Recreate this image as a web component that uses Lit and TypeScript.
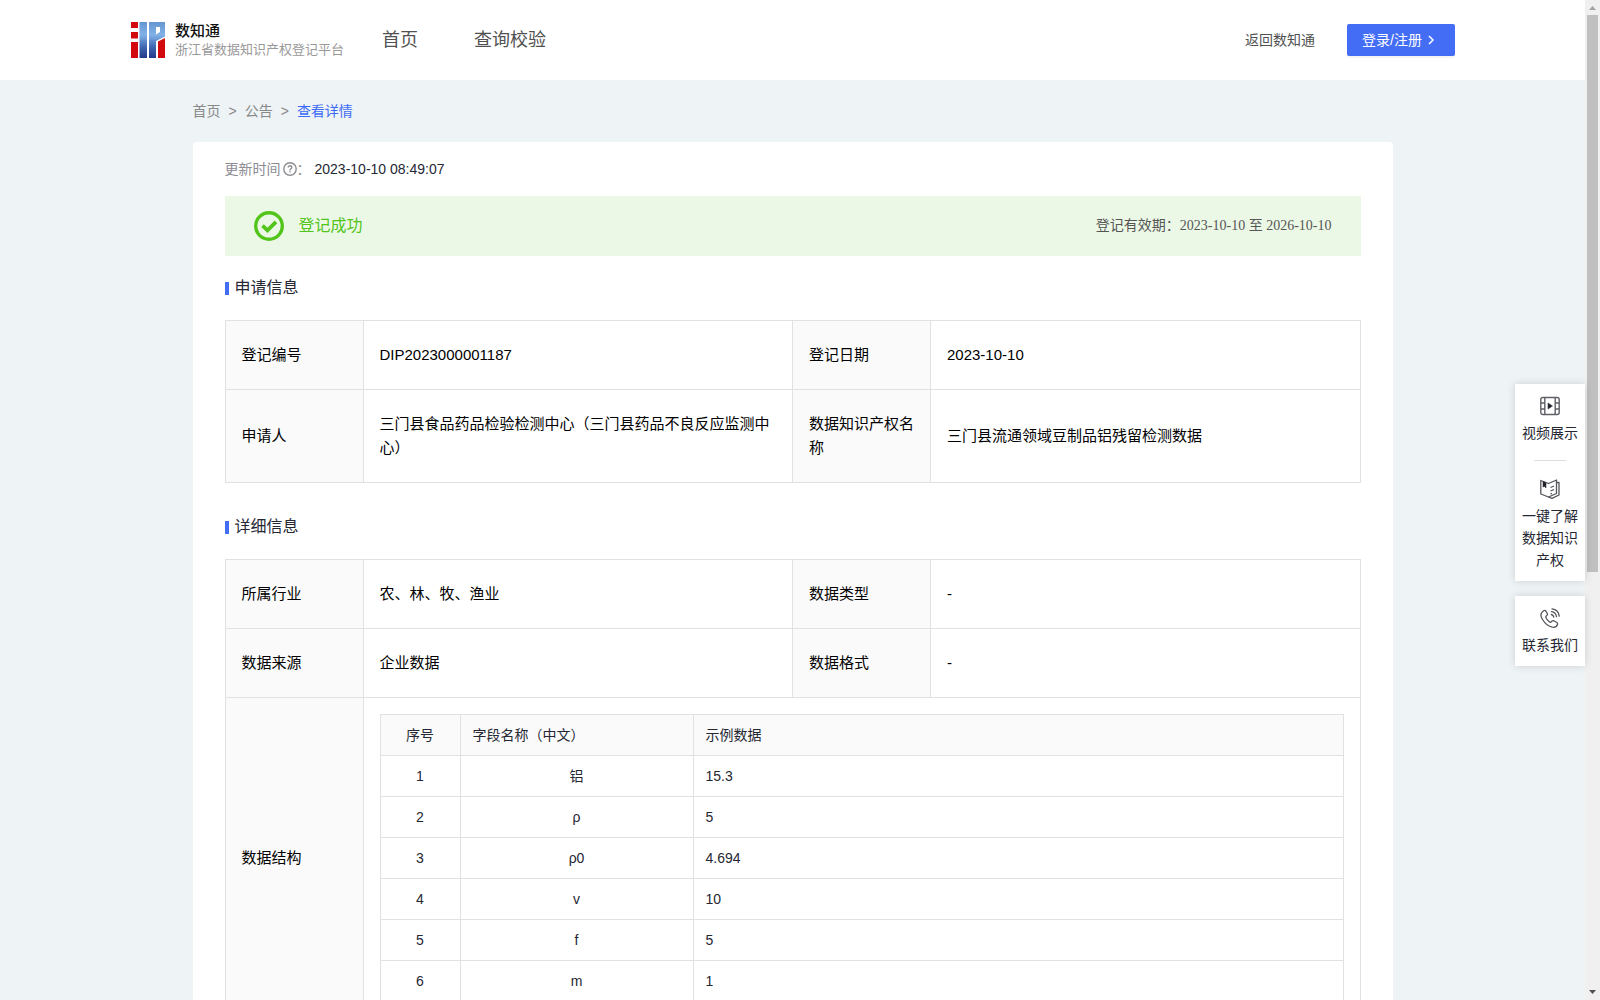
import { LitElement, html, css, svg } from "lit";
import { customElement } from "lit/decorators.js";

const rows: [string, string, string][] = [
  ["1", "铝", "15.3"],
  ["2", "ρ", "5"],
  ["3", "ρ0", "4.694"],
  ["4", "v", "10"],
  ["5", "f", "5"],
  ["6", "m", "1"],
];

const stripes = Array.from({ length: 9 }, (_, i) => i * 2 + 1);

const logo = html`<svg class="logo" viewBox="0 0 34 36" width="34" height="36" aria-hidden="true">
  <defs>
    <linearGradient id="blue" x1="0" y1="0" x2="0" y2="36" gradientUnits="userSpaceOnUse">
      <stop offset="0" stop-color="#5b8fcd" />
      <stop offset=".35" stop-color="#78ade6" />
      <stop offset=".7" stop-color="#3f66b0" />
      <stop offset="1" stop-color="#22398a" />
    </linearGradient>
  </defs>
  <g fill="#d20a0e">
    <path d="M0 0h7v6H0zM0 10h7v6.500H0zM0 20h7v16H0z" />
    <path d="M27 19.500L34 16V36H27z" />
  </g>
  <g fill="url(#blue)">
    <path d="M8.500 0h7.500v36H8.500z" />
    <path fill-rule="evenodd" d="M18 0h16v14.500L25 19V36h-7zM25 5v7.500l4-2.500V5z" />
  </g>
  <g stroke="#fff" stroke-opacity=".25" stroke-width=".5">
    ${stripes.map((y) => svg`<path d="M9 ${y}h25" />`)}
  </g>
</svg>`;

const videoIcon = html`<svg class="side-icon" viewBox="0 0 20 20" fill="none" stroke="#5f6066" stroke-width="1.400" aria-hidden="true">
  <rect x=".8" y="1.500" width="18.400" height="17" rx="2" />
  <path d="M4.800 1.500v17M15.200 1.500v17M1 7h3.800M1 13h3.800M15.200 7H19M15.200 13H19" />
  <path d="M8 7l4.500 3L8 13z" fill="#22242c" stroke="#22242c" stroke-width=".5" />
</svg>`;

const bookIcon = html`<svg class="side-icon" viewBox="0 0 20 20" fill="none" stroke="#55565c" stroke-width="1.300" stroke-linejoin="round" aria-hidden="true">
  <path d="M.8 1.500L8.500 4.500 16.500 1v13.500L8.500 18 .8 15z" />
  <path d="M17 3.500h2V16L12 19.400 8.500 18M10.500 8.500l3.500-1.500M10.500 12l3.500-1.500M10.500 15l1.500-.6" />
  <path d="M3 2.500l3 1.200V9L4.500 7.500 3 8z" fill="#22242c" stroke="#22242c" stroke-width=".5" />
</svg>`;

const phoneIcon = html`<svg class="side-icon" viewBox="0 0 20 20" fill="none" stroke="#55565c" stroke-width="1.300" stroke-linecap="round" stroke-linejoin="round" aria-hidden="true">
  <path d="M3 3.200C.5 5 .3 8 2.500 11.500c2.600 4.200 6 7 9.800 7.700 2.500.4 4.500-.8 5.200-2.700.4-1-.2-1.700-1-2.200l-2.700-1.500c-1.200-.6-1.800.2-2.500 1-.6.700-1.300.5-2-.1-1.700-1.300-2.700-2.600-3.300-4-.4-.9-.2-1.400.5-1.900 1-.7 1.300-1.300.8-2.300L6 3.400C5.300 2.200 4.200 2.200 3 3.200z" />
  <path d="M11.300 6.500c1.400.3 2.200 1.200 2.500 2.600M11.500 3.700c2.700.4 4.600 2.300 5 5M12 .9c4 .5 6.700 3.300 7.200 7.200" />
</svg>`;

@customElement("app-root")
export class AppRoot extends LitElement {
  static styles = css`
    :host {
      display: block;
      height: 100vh;
      color: #252733;
      background: #eef3f6;
      font: 14px/22px "Liberation Sans", "Noto Sans CJK SC", sans-serif;
    }
    * { box-sizing: border-box; }
    a { color: inherit; text-decoration: none; }
    .window { display: flex; height: 100%; overflow: hidden; position: relative; }
    .view { flex: 1; min-width: 0; overflow-y: auto; scrollbar-width: none; }

    .header { display: flex; align-items: center; height: 80px; padding: 0 130px 0 131px; background: #fff; }
    .brand { display: flex; align-items: center; gap: 10px; }
    .logo { display: block; }
    .brand-text { display: flex; flex-direction: column; }
    .brand-name { font-size: 15px; line-height: 20px; font-weight: 500; color: #111; }
    .brand-sub { font-size: 13px; line-height: 18px; color: #999; white-space: nowrap; }
    .nav { display: flex; gap: 56px; margin-left: 38px; font-size: 18px; line-height: 24px; color: #515151; }
    .account { display: flex; align-items: center; gap: 32px; margin-left: auto; color: #515151; }
    .login {
      display: flex; align-items: center; gap: 6px;
      height: 32px; padding: 0 20px 0 15px; border: 0; border-radius: 2px;
      background: #446df6; color: #fff; font: inherit; cursor: pointer;
      box-shadow: 0 2px 0 rgba(0, 0, 0, 0.045);
    }

    .container { width: 1200px; max-width: 100%; margin: 0 auto; }
    .crumbs { display: flex; align-items: center; gap: 8px; padding: 20px 0; color: #888; }
    .crumb-here { color: #3d6bf5; }

    .card { padding: 16px 32px 32px; background: #fff; border-radius: 4px; }
    .updated { display: flex; align-items: center; }
    .updated-label { display: flex; align-items: center; gap: 2px; color: #8c8c92; }
    .help { display: block; }
    .updated-colon { color: #8c8c92; width: 18px; }

    .banner {
      display: flex; align-items: center; gap: 15px;
      height: 60px; margin-top: 16px; padding: 0 29px; background: #ecf8e6;
    }
    .banner-icon { display: block; }
    .banner-title { font-size: 16px; line-height: 24px; color: #52c41a; }
    .banner-term { margin-left: auto; color: #555; font-family: "Liberation Serif", "Noto Sans CJK SC", serif; }

    .section-title {
      display: flex; align-items: center; gap: 6px;
      margin: 20px 0; font-size: 16px; line-height: 24px; font-weight: 400;
    }
    .section-title::before { content: ""; width: 4px; height: 13px; background: #446df6; }
    .info + .section-title { margin-top: 32px; }

    .info { width: 100%; border-collapse: collapse; table-layout: fixed; font-size: 15px; line-height: 24px; color: #000; }
    .col-label { width: 138px; }
    .info-label, .info-value { padding: 22px 16px; border: 1px solid #e1e1e1; text-align: left; font-weight: 400; }
    .info-label { background: #fafafa; }
    .info-nested { padding: 16px; border: 1px solid #e1e1e1; }

    .fields { width: 100%; border-collapse: collapse; table-layout: fixed; font-size: 14px; line-height: 22px; color: #252733; }
    .col-index { width: 80px; }
    .col-name { width: 233px; }
    .cell { height: 41px; padding: 0 12px; border: 1px solid #e1e1e1; text-align: left; font-weight: 400; }
    .fields-head { background: #fafafa; }
    .centered { text-align: center; }

    .side { position: absolute; right: 15px; top: 384px; width: 70px; display: flex; flex-direction: column; gap: 15px; }
    .side-box { display: flex; flex-direction: column; align-items: center; background: #fff; box-shadow: 0 0 8px rgba(0, 0, 0, 0.15); }
    .side-link { display: flex; flex-direction: column; align-items: center; gap: 6px; padding: 12px 7px 10px; text-align: center; }
    .side-icon { display: block; width: 20px; height: 20px; }
    .side-rule { width: 32px; height: 1px; margin: 6px 0; border: 0; background: #ddd; }

    .scrollbar { display: flex; flex-direction: column; align-items: center; width: 15px; background: #f0f0f0; }
    .scroll-arrow { display: block; flex: none; }
    .scroll-track { flex: 1; width: 11px; }
    .scroll-thumb { height: 57.400%; background: #c0c0c0; }
  `;

  render() {
    return html`<div class="window">
      <div class="view">
        <header class="header">
          <a class="brand" href="#">
            ${logo}
            <span class="brand-text">
              <span class="brand-name">数知通</span>
              <span class="brand-sub">浙江省数据知识产权登记平台</span>
            </span>
          </a>
          <nav class="nav">
            <a href="#">首页</a>
            <a href="#">查询校验</a>
          </nav>
          <div class="account">
            <a href="#">返回数知通</a>
            <button class="login" type="button">
              登录/注册
              <svg width="7" height="10" viewBox="0 0 7 10" fill="none" stroke="#fff" stroke-width="1.500" aria-hidden="true">
                <path d="M1 1l4 4-4 4" />
              </svg>
            </button>
          </div>
        </header>

        <div class="container">
          <nav class="crumbs">
            <a href="#">首页</a><span>&gt;</span><a href="#">公告</a><span>&gt;</span>
            <a class="crumb-here" href="#">查看详情</a>
          </nav>
          <main class="card">
            <div class="updated">
              <span class="updated-label"><span>更新时间</span>
                <svg class="help" width="14" height="14" viewBox="0 0 14 14" fill="none" stroke="#8c8c92" stroke-width="1.400" aria-hidden="true">
                  <circle cx="7" cy="7" r="6.200" />
                  <path d="M5.200 5.600C5.200 3 8.800 3.200 8.800 5.400 8.800 6.700 7 6.800 7 8.400M7 9.300v1.200" />
                </svg>
              </span>
              <span class="updated-colon">：</span>
              <time>2023-10-10 08:49:07</time>
            </div>

            <div class="banner">
              <svg class="banner-icon" width="30" height="30" viewBox="0 0 30 30" fill="none" stroke="#52c41a" aria-hidden="true">
                <circle cx="15" cy="15" r="13.300" stroke-width="3.400" />
                <path d="M8.500 14.600l5 4.700 8.500-8.500" stroke-width="3.800" />
              </svg>
              <span class="banner-title">登记成功</span>
              <span class="banner-term">登记有效期：2023-10-10 至 2026-10-10</span>
            </div>

            <h2 class="section-title">申请信息</h2>
            <table class="info">
              <colgroup><col class="col-label" /><col /><col class="col-label" /><col /></colgroup>
              <tbody>
                <tr>
                  <th class="info-label" scope="row">登记编号</th>
                  <td class="info-value">DIP2023000001187</td>
                  <th class="info-label" scope="row">登记日期</th>
                  <td class="info-value">2023-10-10</td>
                </tr>
                <tr>
                  <th class="info-label" scope="row">申请人</th>
                  <td class="info-value">三门县食品药品检验检测中心（三门县药品不良反应监测中心）</td>
                  <th class="info-label" scope="row">数据知识产权名称</th>
                  <td class="info-value">三门县流通领域豆制品铝残留检测数据</td>
                </tr>
              </tbody>
            </table>

            <h2 class="section-title">详细信息</h2>
            <table class="info">
              <colgroup><col class="col-label" /><col /><col class="col-label" /><col /></colgroup>
              <tbody>
                <tr>
                  <th class="info-label" scope="row">所属行业</th>
                  <td class="info-value">农、林、牧、渔业</td>
                  <th class="info-label" scope="row">数据类型</th>
                  <td class="info-value">-</td>
                </tr>
                <tr>
                  <th class="info-label" scope="row">数据来源</th>
                  <td class="info-value">企业数据</td>
                  <th class="info-label" scope="row">数据格式</th>
                  <td class="info-value">-</td>
                </tr>
                <tr>
                  <th class="info-label" scope="row">数据结构</th>
                  <td class="info-nested" colspan="3">
                    <table class="fields">
                      <colgroup><col class="col-index" /><col class="col-name" /><col /></colgroup>
                      <thead class="fields-head">
                        <tr>
                          <th class="cell centered" scope="col">序号</th>
                          <th class="cell" scope="col">字段名称（中文）</th>
                          <th class="cell" scope="col">示例数据</th>
                        </tr>
                      </thead>
                      <tbody>
                        ${rows.map(([index, name, sample]) => html`<tr>
                          <td class="cell centered">${index}</td>
                          <td class="cell centered">${name}</td>
                          <td class="cell">${sample}</td>
                        </tr>`)}
                      </tbody>
                    </table>
                  </td>
                </tr>
              </tbody>
            </table>
          </main>
        </div>
      </div>

      <aside class="side">
        <div class="side-box">
          <a class="side-link" href="#">${videoIcon}<span>视频展示</span></a>
          <hr class="side-rule" />
          <a class="side-link" href="#">${bookIcon}<span>一键了解数据知识产权</span></a>
        </div>
        <div class="side-box">
          <a class="side-link" href="#">${phoneIcon}<span>联系我们</span></a>
        </div>
      </aside>

      <div class="scrollbar" aria-hidden="true">
        <svg class="scroll-arrow" width="15" height="15" viewBox="0 0 15 15"><path d="M4 10l3.500-4L11 10z" fill="#a3a3a3" /></svg>
        <div class="scroll-track"><div class="scroll-thumb"></div></div>
        <svg class="scroll-arrow" width="15" height="15" viewBox="0 0 15 15"><path d="M4 5l3.500 4L11 5z" fill="#505050" /></svg>
      </div>
    </div>`;
  }
}
